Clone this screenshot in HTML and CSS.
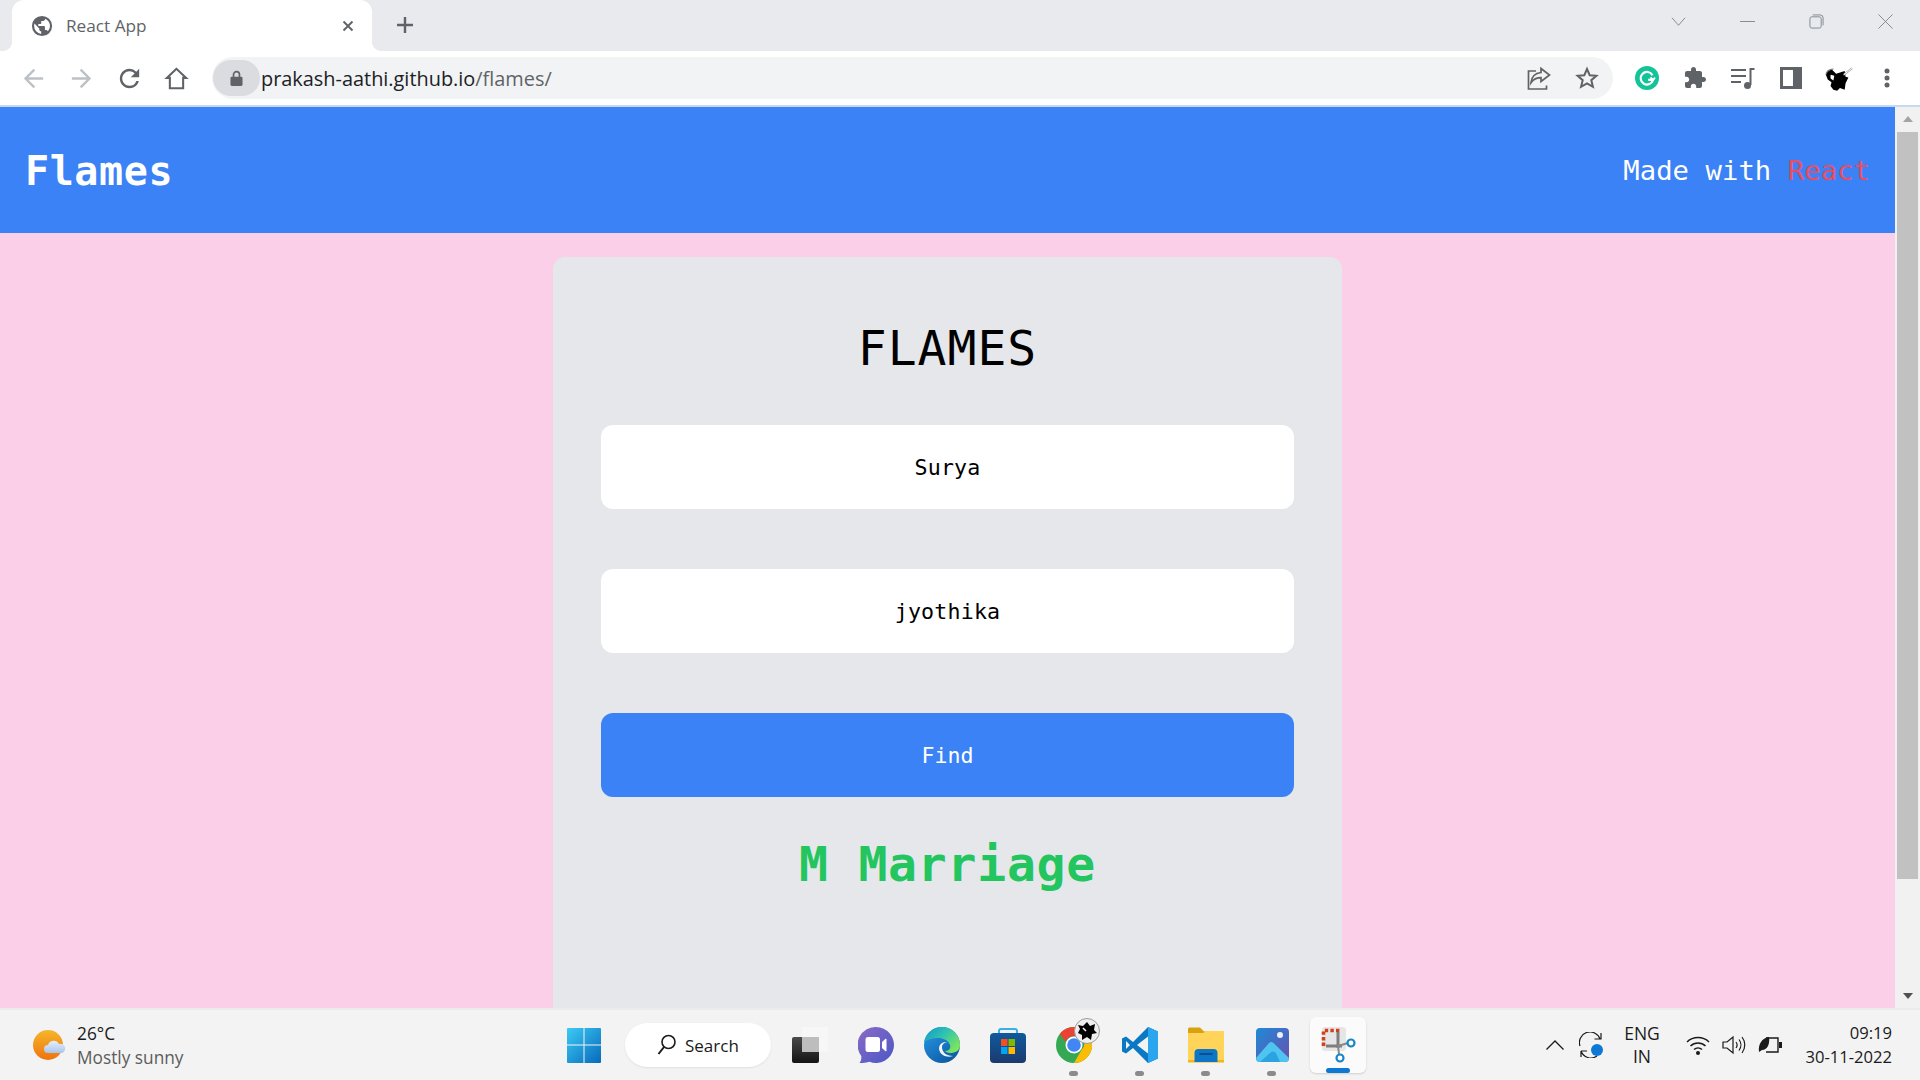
FILE: index.html
```html
<!DOCTYPE html>
<html lang="en">
<head>
<meta charset="utf-8">
<title>React App</title>
<link rel="stylesheet" href="styles.css">
</head>
<body>
<div class="screen">
  <div class="tabstrip">
    <div class="tab">
      <svg class="favicon" viewBox="0 0 24 24"><path fill="#5f6368" d="M12 1a11 11 0 1 0 0 22 11 11 0 0 0 0-22zM3.4 12c0-.9.2-1.8.4-2.600L9 14.600v1.100c0 1.200 1 2.100 2.100 2.100v2.800A8.600 8.600 0 0 1 3.400 12zm14.900 5.800a2.100 2.100 0 0 0-2-1.500h-1.100V13c0-.6-.5-1.100-1.100-1.100H8v-2.100h2.100c.6 0 1.100-.5 1.100-1.100V6.500h2.100c1.200 0 2.100-1 2.100-2.100V4A8.600 8.600 0 0 1 18.300 17.800z"/></svg>
      <span class="tab-title">React App</span>
      <svg class="tab-close" viewBox="0 0 12 12"><path d="M1.500 1.500l9 9M10.500 1.500l-9 9" stroke="#5f6368" stroke-width="1.900" fill="none"/></svg>
    </div>
    <svg class="newtab" viewBox="0 0 18 18"><path d="M9 1v16M1 9h16" stroke="#5f6368" stroke-width="2.400" fill="none"/></svg>
    <div class="winctl">
      <svg class="winbtn" viewBox="0 0 16 16"><path d="M1 4l7 8 7-8" fill="none" stroke="#80868b" stroke-width="1"/></svg>
      <svg class="winbtn" viewBox="0 0 16 16"><path d="M0 8h16" fill="none" stroke="#80868b" stroke-width="1"/></svg>
      <svg class="winbtn" viewBox="0 0 16 16"><rect x="1" y="3" width="12" height="12" rx="2" fill="none" stroke="#80868b"/><path d="M4 1h8a3 3 0 0 1 3 3v8" fill="none" stroke="#80868b"/></svg>
      <svg class="winbtn" viewBox="0 0 16 16"><path d="M0.500 0.500l15 15M15.500 0.500l-15 15" fill="none" stroke="#80868b" stroke-width="1"/></svg>
    </div>
  </div>

  <div class="toolbar">
    <button class="tool"><svg class="icon-nav" viewBox="0 0 24 24"><path fill="#bdc1c6" d="M20 11H7.800l5.600-5.600L12 4l-8 8 8 8 1.400-1.400L7.800 13H20z"/></svg></button>
    <button class="tool"><svg class="icon-nav" viewBox="0 0 24 24"><path fill="#bdc1c6" d="M4 11h12.200l-5.600-5.600L12 4l8 8-8 8-1.400-1.400 5.600-5.600H4z"/></svg></button>
    <button class="tool"><svg class="icon-nav" viewBox="0 0 24 24"><path fill="#5f6368" d="M17.650 6.350A7.958 7.958 0 0 0 12 4c-4.420 0-7.990 3.580-7.990 8s3.570 8 7.990 8c3.730 0 6.840-2.550 7.730-6h-2.080A5.990 5.990 0 0 1 12 18c-3.310 0-6-2.690-6-6s2.690-6 6-6c1.660 0 3.140.690 4.220 1.780L13 11h7V4l-2.350 2.350z"/></svg></button>
    <button class="tool tool-home"><svg class="icon-nav" viewBox="0 0 24 24"><path fill="none" stroke="#5f6368" stroke-width="1.700" d="M12 4L4 11.500H6.500V20h11v-8.500H20z"/></svg></button>
    <div class="omnibox">
      <span class="lockpill"><svg viewBox="0 0 14 18"><path fill="#5f6368" d="M2 7h10a1.500 1.500 0 0 1 1.500 1.500v7A1.500 1.500 0 0 1 12 17H2a1.500 1.500 0 0 1-1.500-1.500v-7A1.500 1.500 0 0 1 2 7z"/><path fill="none" stroke="#5f6368" stroke-width="1.800" d="M3.800 7.500V4.800a3.200 3.200 0 0 1 6.400 0v2.700"/></svg></span>
      <span class="url"><span class="url-host">prakash-aathi.github.io</span>/flames/</span>
      <span class="omni-actions">
        <svg class="omni-icon" viewBox="0 0 24 24"><path fill="none" stroke="#5f6368" stroke-width="1.700" d="M9 5H1.500v18h18v-3.500M14 2.500l8.500 6.500-8.500 6.500v-3.800c-4.500 0-7.500 1.500-10 5 .5-5.500 4-9.500 10-10.200z"/></svg>
        <svg class="omni-icon" viewBox="0 0 24 24"><path fill="none" stroke="#5f6368" stroke-width="2" d="M12 3l2.700 6.200 6.700.6-5.100 4.400 1.600 6.600L12 17.300l-5.900 3.500 1.600-6.600L2.600 9.800l6.700-.6z"/></svg>
      </span>
    </div>
    <button class="tool"><svg viewBox="0 0 24 24"><circle cx="12" cy="12" r="12" fill="#15c39a"/><path fill="none" stroke="#fff" stroke-width="2.200" d="M17.500 9.200a6.300 6.300 0 1 0 .6 4.600h-5"/><path fill="none" stroke="#fff" stroke-width="1.800" d="M15.500 11.500l2.500 2.500 2-2.300"/></svg></button>
    <button class="tool"><svg viewBox="0 0 24 24"><path fill="#5f6368" d="M20.500 11H19V7c0-1.100-.9-2-2-2h-4V3.500C13 2.120 11.880 1 10.500 1S8 2.120 8 3.500V5H4c-1.100 0-1.990.9-1.990 2v3.800H3.500c1.490 0 2.700 1.210 2.700 2.700s-1.210 2.700-2.700 2.700H2V20c0 1.100.9 2 2 2h3.800v-1.500c0-1.490 1.210-2.700 2.700-2.700 1.490 0 2.700 1.210 2.700 2.700V22H17c1.100 0 2-.9 2-2v-4h1.500c1.380 0 2.500-1.120 2.500-2.500S21.880 11 20.500 11z"/></svg></button>
    <button class="tool"><svg viewBox="0 0 24 24"><path stroke="#5f6368" stroke-width="2" fill="none" d="M0 4h15M0 10h15M0 16h10M19.500 19V3h4"/><circle cx="16.500" cy="19.500" r="3.500" fill="#5f6368"/></svg></button>
    <button class="tool"><svg class="icon-side" viewBox="0 0 22 22"><path fill="#5f6368" fill-rule="evenodd" d="M0 0h22v22H0zM3 3v16h10V3z"/></svg></button>
    <button class="tool"><svg class="icon-avatar" viewBox="0 0 32 26"><path fill="#000" d="M3 6l5-3 5 5 9-3 1 6 3 1-3 6-1 7-5-2-3 3-4-1-3-4 1-4-4-3-2-5z"/><path fill="none" stroke="#777" stroke-width="1.200" d="M2 9c1-5 5-6 8-6"/><path stroke="#999" stroke-width="2" d="M21 9l9-7"/><path stroke="#fff" stroke-width="1" d="M21 9l9-7"/><path fill="#fff" d="M7 9l4 1-1 5-3-2z"/></svg></button>
    <button class="tool"><svg class="icon-dots" viewBox="0 0 6 20"><circle cx="3" cy="3" r="2.500" fill="#5f6368"/><circle cx="3" cy="10" r="2.500" fill="#5f6368"/><circle cx="3" cy="17" r="2.500" fill="#5f6368"/></svg></button>
  </div>

  <div class="viewport">
    <main class="page">
      <header class="navbar">
        <h1 class="brand">Flames</h1>
        <p class="made">Made with <span class="react">React</span></p>
      </header>
      <section class="card">
        <h2 class="card-title">FLAMES</h2>
        <input class="field" type="text" value="Surya">
        <input class="field" type="text" value="jyothika">
        <button class="find">Find</button>
        <p class="result">M Marriage</p>
      </section>
    </main>
    <div class="scrollbar">
      <span class="arrow-up"></span>
      <span class="thumb"></span>
      <span class="arrow-down"></span>
    </div>
  </div>

  <footer class="taskbar">
    <div class="weather">
      <svg class="weather-icon" viewBox="0 0 34 30"><defs><linearGradient id="sun" x1="0" y1="0" x2="0" y2="1"><stop offset="0" stop-color="#f5b62a"/><stop offset="1" stop-color="#f0720f"/></linearGradient><linearGradient id="cloud" x1="0" y1="0" x2="0" y2="1"><stop offset="0" stop-color="#e4eefb"/><stop offset="1" stop-color="#a9c5ec"/></linearGradient></defs><circle cx="15" cy="15" r="15" fill="url(#sun)"/><path fill="url(#cloud)" d="M15 23a4 4 0 0 1 0-8 6 6 0 0 1 11-1 4.500 4.500 0 0 1 3 9z"/></svg>
      <div class="weather-text"><span class="temp">26°C</span><span class="cond">Mostly sunny</span></div>
    </div>
    <div class="tb-center">
      <div class="tb-item"><svg class="ic-win" viewBox="0 0 34 35"><defs><linearGradient id="win" x1="0" y1="0" x2="1" y2="1"><stop offset="0" stop-color="#3ccbf4"/><stop offset="1" stop-color="#0669bc"/></linearGradient></defs><path fill="url(#win)" d="M1 0h15.500v16.500H0V1a1 1 0 0 1 1-1zM17.500 0H33a1 1 0 0 1 1 1v15.500H17.500zM0 17.500h16.500V35H1a1 1 0 0 1-1-1zM17.500 17.500H34V34a1 1 0 0 1-1 1H17.500z"/></svg></div>
      <div class="searchpill"><svg class="ic-search" viewBox="0 0 20 22"><circle cx="11.500" cy="8" r="6.500" fill="none" stroke="#1a1a1a" stroke-width="1.600"/><path stroke="#1a1a1a" stroke-width="2" d="M7 13l-5.500 7"/></svg><span>Search</span></div>
      <div class="tb-items">
        <div class="tb-item"><svg class="ic" viewBox="0 0 36 36"><defs><linearGradient id="tvdark" x1="0" y1="0" x2="0" y2="1"><stop offset="0" stop-color="#4a4a4a"/><stop offset="1" stop-color="#141414"/></linearGradient></defs><rect x="0" y="10" width="27" height="26" rx="2" fill="url(#tvdark)"/><rect x="10" y="0" width="26" height="25" rx="1" fill="#f7f7f7" opacity=".92"/><rect x="10" y="10" width="17" height="15" fill="#bdbdbd"/></svg></div>
        <div class="tb-item"><svg class="ic" viewBox="0 0 36 36"><defs><linearGradient id="teams" x1="0" y1="0" x2="1" y2="1"><stop offset="0" stop-color="#8a6bc6"/><stop offset="1" stop-color="#4b57c6"/></linearGradient></defs><path fill="url(#teams)" d="M18 0a18 18 0 1 1-6.500 34.800C9 35.800 5 36 1.500 36c1.500-2 2-4 1.800-7A18 18 0 0 1 18 0z"/><rect x="7.500" y="10" width="14.500" height="15" rx="2.500" fill="#fff"/><path fill="#fff" d="M24 15l3.500-3.200a.6.600 0 0 1 1 .4v11.600a.6.600 0 0 1-1 .4L24 21z"/></svg></div>
        <div class="tb-item"><svg class="ic" viewBox="0 0 36 36"><defs><linearGradient id="edgeg" x1="0" y1="0" x2="1" y2=".7"><stop offset="0" stop-color="#1296cc"/><stop offset=".5" stop-color="#2fc2b0"/><stop offset="1" stop-color="#7fe65a"/></linearGradient><linearGradient id="edgeb" x1="0" y1="0" x2=".7" y2="1"><stop offset="0" stop-color="#2a9be8"/><stop offset="1" stop-color="#0c5ba4"/></linearGradient></defs><circle cx="18" cy="18" r="18" fill="url(#edgeb)"/><path fill="url(#edgeg)" d="M0 15C2 6 9 0 18 0c10 0 18 8 18 18 0 6-5 8-10 8-2 0-4-1-5-2 4 0 6-3 5-6-2-5-7-7-12-7-6 0-11 2-14 4z"/><path fill="#f3f3f3" d="M15 22c0-6 5-8 9-6-2-1-6 0-6 4 0 5 4 9 11 9-5 2-13 0-14-7z"/></svg></div>
        <div class="tb-item"><svg class="ic" viewBox="0 0 36 36"><defs><linearGradient id="store" x1="0" y1="0" x2="0" y2="1"><stop offset="0" stop-color="#0f5a9e"/><stop offset="1" stop-color="#1c3a6e"/></linearGradient></defs><path fill="none" stroke="#36b0e6" stroke-width="2" d="M9 9V4a2 2 0 0 1 2-2h14a2 2 0 0 1 2 2v5"/><rect x="0" y="6" width="36" height="30" rx="4" fill="url(#store)"/><rect x="11" y="12" width="6.500" height="7" fill="#f25022"/><rect x="18.500" y="12" width="6.500" height="7" fill="#7fba00"/><rect x="11" y="20" width="6.500" height="7" fill="#00a4ef"/><rect x="18.500" y="20" width="6.500" height="7" fill="#ffb900"/></svg></div>
        <div class="tb-item dot">
          <svg class="ic" viewBox="0 0 36 36"><circle cx="18" cy="18" r="18" fill="#34a853"/><path fill="#ea4335" d="M18 0a18 18 0 0 1 15.600 9H18a9 9 0 0 0-8.500 6L3.800 6.900A18 18 0 0 1 18 0z"/><path fill="#fbbc04" d="M33.600 9A18 18 0 0 1 18 36l7.800-13.500A9 9 0 0 0 25 9z"/><circle cx="18" cy="18" r="8.500" fill="#fff"/><circle cx="18" cy="18" r="6.800" fill="#4285f4"/></svg>
          <svg class="badge" viewBox="0 0 26 26"><circle cx="13" cy="13" r="12.500" fill="#eeeeee" stroke="#9a9a9a"/><path fill="#000" d="M4 7l5 1 4-4 3 4 5-2-1 6 3 3-5 1-1 6-4-3-5 3 0-5-4-2 2-4z"/><path stroke="#fff" stroke-width="1.500" d="M9 10l3 3"/></svg>
        </div>
        <div class="tb-item dot"><svg class="ic" viewBox="0 0 36 36"><path fill="#0a78c4" d="M26 0L11 15 4 9.500 0 11.500v13l4 2 7-5.500 15 15 10-4.500V4.500zM4 14l4 4-4 4zM26 9.500v17L15 18z"/><path fill="#2ba6ee" d="M26 0l10 4.500v27L26 36z"/></svg></div>
        <div class="tb-item dot"><svg class="ic" viewBox="0 0 36 36"><path fill="#d9a10d" d="M0 2a1.500 1.500 0 0 1 1.500-1.500H12l4 4h20V10H0z"/><path fill="#ffd459" d="M0 6h15l4-2h17v31H0z"/><rect x="0" y="33" width="36" height="2.500" fill="#f2b716"/><path fill="#0e76c6" d="M6.500 35V26a4 4 0 0 1 4-4h15a4 4 0 0 1 4 4v9z"/><rect x="11.500" y="26" width="13" height="2" fill="#0a4f8c"/></svg></div>
        <div class="tb-item dot"><svg class="ic-photos" viewBox="0 0 33 34"><defs><linearGradient id="ph" x1="0" y1="0" x2="1" y2="1"><stop offset="0" stop-color="#1e8ad6"/><stop offset="1" stop-color="#6a4fb0"/></linearGradient></defs><rect width="33" height="34" rx="4" fill="url(#ph)"/><circle cx="24" cy="7" r="3" fill="#eef"/><path fill="#4fc4f0" d="M0 30l13-15c1.500-1.500 3-1.500 4.500 0L33 30v0a4 4 0 0 1-4 4H4a4 4 0 0 1-4-4z"/><path fill="#2aa3e0" d="M4 34l10-9c2-2 4-2 6 0l4 9z"/></svg></div>
        <div class="tb-item active"><svg class="ic" viewBox="0 0 36 36"><rect x="2" y="0" width="24" height="24" rx="3" fill="#e6e6e6"/><path fill="none" stroke="#d0401a" stroke-width="3.600" stroke-dasharray="3.400 2.200" d="M3.500 19V3.500h17"/><path stroke="#7e7e7e" stroke-width="3" fill="none" d="M6 19h16M18 5v16"/><path stroke="#888" stroke-width="2" d="M18 19l10-3M18 19l1 8"/><circle cx="31" cy="16" r="3.500" fill="#fff" stroke="#1a86c8" stroke-width="2.200"/><circle cx="20" cy="31" r="3.500" fill="#fff" stroke="#1a86c8" stroke-width="2.200"/></svg></div>
      </div>
    </div>
    <div class="tray">
      <svg class="tray-chev" viewBox="0 0 18 10"><path d="M0.500 9.500L9 1l8.500 8.500" fill="none" stroke="#1a1a1a" stroke-width="1.300"/></svg>
      <svg class="tray-sync" viewBox="0 0 24 26"><path d="M1 14A10.500 10.500 0 0 1 21 7M15.500 7H22V1M2 19H8M2 19v6M2 19a10.500 10.500 0 0 0 16 5" fill="none" stroke="#1a1a1a" stroke-width="1.200"/><circle cx="18" cy="18" r="6" fill="#0f78d4"/></svg>
      <div class="lang"><span>ENG</span><span>IN</span></div>
      <svg class="tray-wifi" viewBox="0 0 24 20"><path d="M1 7a16 16 0 0 1 22 0M4.500 11a11 11 0 0 1 15 0M8 14.500a6 6 0 0 1 8 0" fill="none" stroke="#1a1a1a" stroke-width="1.500"/><circle cx="12" cy="18" r="2" fill="#1a1a1a"/></svg>
      <svg class="tray-vol" viewBox="0 0 24 20"><path d="M1 7h4l6-5v16l-6-5H1z" fill="none" stroke="#1a1a1a" stroke-width="1.200"/><path d="M14 7a5 5 0 0 1 0 6M17 4.500a9 9 0 0 1 0 11M20 2a13 13 0 0 1 0 16" fill="none" stroke="#1a1a1a" stroke-width="1.200"/></svg>
      <svg class="tray-batt" viewBox="0 0 24 18"><path d="M8 2h12v14H8" fill="none" stroke="#1a1a1a" stroke-width="1.400"/><rect x="21" y="6" width="3" height="6" fill="#1a1a1a"/><path d="M1 16C0 8 4 2 11 1c1 6-1 13-7 13z" fill="#1a1a1a"/></svg>
      <div class="clock"><span>09:19</span><span>30-11-2022</span></div>
    </div>
  </footer>
</div>
</body>
</html>
```

FILE: styles.css
```css
* { box-sizing: border-box; }
html, body { margin: 0; height: 100%; overflow: hidden; }
svg { display: block; flex: none; }
.screen { width: 1920px; height: 1080px; display: flex; flex-direction: column; overflow: hidden; font-family: "Open Sans", "Noto Sans", sans-serif; }

.tabstrip { height: 51px; flex: none; background: #e8eaed; display: flex; align-items: stretch; padding-left: 12px; }
.tab { width: 360px; background: #fff; border-radius: 12px 12px 0 0; display: flex; align-items: center; padding: 0 0 0 19px; position: relative; }
.tab::before, .tab::after { content: ""; position: absolute; bottom: 0; width: 10px; height: 10px; }
.tab::before { left: -10px; background: radial-gradient(circle at 0 0, #e8eaed 10px, #fff 10.500px); }
.tab::after { right: -10px; background: radial-gradient(circle at 100% 0, #e8eaed 10px, #fff 10.500px); }
.favicon { width: 22px; height: 22px; }
.tab-title { margin-left: 13px; font-size: 17.200px; color: #5f6368; width: 265px; }
.tab-close { width: 12px; height: 12px; margin-left: 11px; }
.newtab { width: 18px; height: 18px; margin: 16px 0 0 24px; align-self: flex-start; }
.winctl { margin-left: auto; display: flex; align-items: center; padding: 0 27px 9px 0; gap: 54px; }
.winbtn { width: 15px; height: 15px; }

.toolbar { height: 56px; flex: none; background: #fff; border-bottom: 2px solid #c6d9ee; display: flex; align-items: center; padding: 0 9px; }
.tool { width: 48px; height: 48px; border: 0; background: none; padding: 0; display: flex; align-items: center; justify-content: center; }
.tool svg { width: 24px; height: 24px; }
.tool .icon-nav { width: 29px; height: 29px; }
.tool-home { padding-right: 2px; }
.tool .icon-side { width: 22px; height: 22px; }
.tool .icon-avatar { width: 30px; height: 25px; }
.tool .icon-dots { width: 6px; height: 20px; }
.omnibox { width: 1401px; height: 42px; margin-left: 11px; margin-right: 10px; background: #f1f3f4; border-radius: 21px; display: flex; align-items: center; padding-left: 1px; }
.lockpill { width: 47px; height: 36px; border-radius: 18px; background: #dadce0; display: flex; align-items: center; justify-content: center; }
.lockpill svg { width: 13px; height: 17px; }
.url { margin-left: 1px; font-size: 19.900px; color: #5f6368; white-space: nowrap; }
.url-host { color: #202124; }
.omni-actions { margin-left: auto; display: flex; gap: 24px; padding-right: 14px; }
.omni-icon { width: 24px; height: 24px; }

.viewport { flex: 1; min-height: 0; display: flex; overflow: hidden; }
.page { flex: 1; min-width: 0; background: #fbcfe8; font-family: "DejaVu Sans Mono", monospace; overflow: hidden; }
.navbar { height: 126px; background: #3b82f6; color: #fff; display: flex; align-items: center; justify-content: space-between; padding: 0 25px; }
.brand { margin: 2px 0 0; font-size: 40px; font-weight: 700; letter-spacing: .6px; }
.made { margin: 0; font-size: 27.200px; letter-spacing: .08px; }
.react { color: #e94d63; }
.card { width: 789px; margin: 24px auto 0; height: 900px; padding: 48px 48px 0; background: #e5e7eb; border-radius: 12px; display: flex; flex-direction: column; }
.card-title { margin: 7px 0 41px; font-size: 48px; line-height: 72px; font-weight: 400; letter-spacing: 1px; text-align: center; color: #000; }
.field { height: 84px; border: 0; border-radius: 12px; background: #fff; text-align: center; font: 21.600px "DejaVu Sans Mono", monospace; letter-spacing: .2px; color: #000; margin-bottom: 60px; outline: 0; width: 100%; }
.find { height: 84px; border: 0; border-radius: 12px; background: #3b82f6; color: #fff; font: 21.600px "DejaVu Sans Mono", monospace; }
.result { margin: 31px 0 0; font-size: 48px; line-height: 72px; font-weight: 700; letter-spacing: .8px; color: #22c55e; text-align: center; }

.scrollbar { width: 25px; flex: none; background: #f1f1f1; display: flex; flex-direction: column; align-items: center; padding-top: 9px; }
.arrow-up { border: 5.500px solid transparent; border-top: 0; border-bottom: 6px solid #a3a3a3; }
.thumb { width: 21px; height: 747px; background: #c1c1c1; margin-top: 10px; }
.arrow-down { margin-top: 114px; border: 5.500px solid transparent; border-bottom: 0; border-top: 6px solid #505050; }

.taskbar { height: 72px; flex: none; background: #f3f3f3; border-top: 2px solid #ebebeb; display: flex; align-items: center; color: #1a1a1a; }
.weather { width: 551px; flex: none; display: flex; align-items: center; padding-left: 33px; }
.weather-icon { width: 34px; height: 30px; }
.weather-text { display: flex; flex-direction: column; margin: 1px 0 0 10px; line-height: 24px; font-size: 17.300px; }
.cond { color: #5c5c5c; }
.tb-center { display: flex; align-items: center; }
.tb-item { width: 66px; height: 56px; display: flex; align-items: center; justify-content: center; position: relative; }
.ic { width: 36px; height: 36px; }
.ic-win { width: 34px; height: 35px; }
.ic-photos { width: 33px; height: 34px; }
.searchpill { width: 146px; height: 44px; margin: 0 6px 0 8px; border-radius: 22px; background: #fff; box-shadow: 0 1px 2px rgba(0,0,0,.08); display: flex; align-items: center; padding-left: 32px; font-size: 17px; gap: 8px; }
.ic-search { width: 20px; height: 22px; }
.tb-items { display: flex; align-items: center; }
.dot::after { content: ""; position: absolute; left: 28px; bottom: -3px; width: 9px; height: 5px; border-radius: 3px; background: #8b8b8b; }
.active { width: 56px; margin: 0 5px; background: #fbfbfb; border-radius: 6px; box-shadow: 0 1px 2px rgba(0,0,0,.15); }
.active::after { content: ""; position: absolute; left: 16px; bottom: 0; width: 24px; height: 5px; border-radius: 3px; background: #0f78d4; }
.badge { position: absolute; left: 33px; top: 1px; width: 26px; height: 26px; }

.tray { margin-left: auto; display: flex; align-items: center; padding-right: 28px; }
.tray-chev { width: 18px; height: 10px; }
.tray-sync { width: 24px; height: 26px; margin-left: 15px; }
.lang { width: 36px; margin-left: 21px; display: flex; flex-direction: column; align-items: center; font-size: 17.500px; line-height: 23px; white-space: nowrap; }
.tray-wifi { width: 24px; height: 20px; margin-left: 26px; }
.tray-vol { width: 24px; height: 20px; margin-left: 12px; }
.tray-batt { width: 24px; height: 18px; margin-left: 12px; }
.clock { width: 110px; display: flex; flex-direction: column; align-items: flex-end; font-size: 16.600px; line-height: 24px; white-space: nowrap; }
```
